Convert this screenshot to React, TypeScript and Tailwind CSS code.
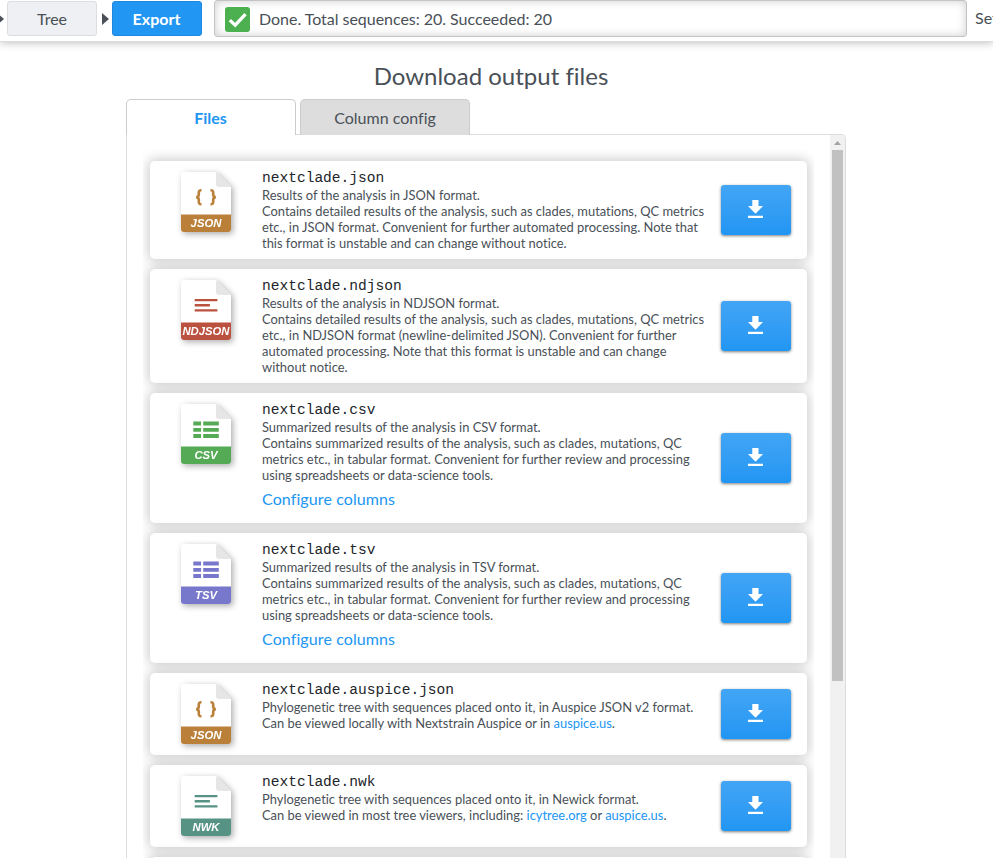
import React from 'react'

type Kind = 'braces' | 'lines' | 'table'

interface OutputFile {
  name: string
  ext: string
  color: string
  kind: Kind
  lines: React.ReactNode[]
  configurable?: boolean
}

const Link = ({ children }: { children: React.ReactNode }) => (
  <a className="text-[#2196f3]">{children}</a>
)

const files: OutputFile[] = [
  {
    name: 'nextclade.json',
    ext: 'JSON',
    color: '#ba8039',
    kind: 'braces',
    lines: [
      'Results of the analysis in JSON format.',
      'Contains detailed results of the analysis, such as clades, mutations, QC metrics',
      'etc., in JSON format. Convenient for further automated processing. Note that',
      'this format is unstable and can change without notice.',
    ],
  },
  {
    name: 'nextclade.ndjson',
    ext: 'NDJSON',
    color: '#bb513f',
    kind: 'lines',
    lines: [
      'Results of the analysis in NDJSON format.',
      'Contains detailed results of the analysis, such as clades, mutations, QC metrics',
      'etc., in NDJSON format (newline-delimited JSON). Convenient for further',
      'automated processing. Note that this format is unstable and can change',
      'without notice.',
    ],
  },
  {
    name: 'nextclade.csv',
    ext: 'CSV',
    color: '#55aa55',
    kind: 'table',
    configurable: true,
    lines: [
      'Summarized results of the analysis in CSV format.',
      'Contains summarized results of the analysis, such as clades, mutations, QC',
      'metrics etc., in tabular format. Convenient for further review and processing',
      'using spreadsheets or data-science tools.',
    ],
  },
  {
    name: 'nextclade.tsv',
    ext: 'TSV',
    color: '#7777cc',
    kind: 'table',
    configurable: true,
    lines: [
      'Summarized results of the analysis in TSV format.',
      'Contains summarized results of the analysis, such as clades, mutations, QC',
      'metrics etc., in tabular format. Convenient for further review and processing',
      'using spreadsheets or data-science tools.',
    ],
  },
  {
    name: 'nextclade.auspice.json',
    ext: 'JSON',
    color: '#ba8039',
    kind: 'braces',
    lines: [
      'Phylogenetic tree with sequences placed onto it, in Auspice JSON v2 format.',
      <>Can be viewed locally with Nextstrain Auspice or in <Link>auspice.us</Link>.</>,
    ],
  },
  {
    name: 'nextclade.nwk',
    ext: 'NWK',
    color: '#579384',
    kind: 'lines',
    lines: [
      'Phylogenetic tree with sequences placed onto it, in Newick format.',
      <>Can be viewed in most tree viewers, including: <Link>icytree.org</Link> or <Link>auspice.us</Link>.</>,
    ],
  },
]

function Glyph({ kind }: { kind: Kind }) {
  if (kind === 'braces') {
    return (
      <g fill="none" stroke="currentColor" strokeWidth="2.6">
        <path d="M20.5 18.2 Q17.8 18 17.8 20.4 V22.6 Q17.8 25 15.2 25.2 Q17.8 25.4 17.8 27.8 V30 Q17.8 32.4 20.5 32.2" />
        <path d="M29.5 18.2 Q32.2 18 32.2 20.4 V22.6 Q32.2 25 34.8 25.2 Q32.2 25.4 32.2 27.8 V30 Q32.2 32.4 29.5 32.2" />
      </g>
    )
  }
  if (kind === 'lines') {
    return <path fill="currentColor" d="M13.7 18.9h22.7v2.4H13.7zM13.7 24.1h15.2v2.3H13.7zM13.7 29.2h22.7v2.4H13.7z" />
  }
  return (
    <path
      fill="currentColor"
      d="M12.3 17.6h7.8v3.9h-7.8zM22.2 17.6h15.6v3.9H22.2zM12.3 23.9h7.8v3.9h-7.8zM22.2 23.9h15.6v3.9H22.2zM12.3 30.1h7.8v4h-7.8zM22.2 30.1h15.6v4H22.2z"
    />
  )
}

function FileIcon({ file }: { file: OutputFile }) {
  return (
    <svg
      className="mt-[11px] h-[60px] w-[50px] shrink-0 drop-shadow-[2px_2px_3px_rgba(0,0,0,0.33)]"
      viewBox="0 0 50 60"
      style={{ color: file.color }}
    >
      <path d="M3 0H35L50 15V57a3 3 0 0 1-3 3H3a3 3 0 0 1-3-3V3a3 3 0 0 1 3-3z" fill="#fff" />
      <path d="M35 0L50 15H38a3 3 0 0 1-3-3z" fill="#e6e6e6" />
      <path d="M0 42.4H50V57a3 3 0 0 1-3 3H3a3 3 0 0 1-3-3z" fill="currentColor" />
      <Glyph kind={file.kind} />
      <text
        x="25"
        y="55"
        textAnchor="middle"
        fill="#fff"
        className="font-['Liberation_Sans',Arial,sans-serif] text-[11.3px] font-bold italic"
      >
        {file.ext}
      </text>
    </svg>
  )
}

function FileCard({ file }: { file: OutputFile }) {
  return (
    <li className="flex min-h-[82px] shrink-0 rounded-[5px] bg-white pr-4 pl-[31px] shadow-[0_0_12px_2px_rgba(0,0,0,0.2)]">
      <FileIcon file={file} />
      <div className="ml-[31px] flex-1 py-2 whitespace-nowrap">
        <h2 className="h-[18px] font-['Liberation_Mono',monospace] text-[14.55px] leading-[18px] text-[#212529]">
          {file.name}
        </h2>
        {file.lines.map((line, i) => (
          <p key={i} className="text-[12.92px] leading-4">
            {line}
          </p>
        ))}
        {file.configurable && (
          <button className="block h-8 text-base leading-8 tracking-[0.1px] text-[#2196f3]">Configure columns</button>
        )}
      </div>
      <button className="flex h-[50px] w-[70px] items-center justify-center self-center rounded-[3px] bg-linear-to-b from-[#42a5f5] to-[#2196f3] shadow-[0_1px_3px_rgba(0,0,0,0.5)]">
        <svg className="mb-[2px] h-[18px] w-[15px] -translate-x-px" viewBox="0 0 15 18" fill="#fff">
          <path d="M4.3 0h6.2v6.1H15L7.5 13.7 0 6.1h4.3zM0 15.8h15V18H0z" />
        </svg>
      </button>
    </li>
  )
}

const Arrow = () => (
  <svg className="h-3 w-[7px] shrink-0" viewBox="0 0 7 12">
    <path d="M0 0L7 6L0 12z" fill="#495057" />
  </svg>
)

export default function App() {
  return (
    <div className="flex h-[858px] w-[993px] flex-col overflow-hidden bg-white font-[Lato,sans-serif] text-base text-[#495057] [font-variant-ligatures:none]">
      <header className="flex h-[42px] shrink-0 items-start overflow-hidden border-b border-[#dcdcdc] whitespace-nowrap shadow-[0_1px_8px_rgba(0,0,0,0.25)]">
        <div className="-ml-[3px] flex h-[37px] items-center">
          <Arrow />
        </div>
        <button className="mt-px ml-[3px] h-[35px] w-[90px] shrink-0 rounded-[3px] border border-[#dcdde0] bg-[#eff0f3]">
          Tree
        </button>
        <div className="ml-[5px] flex h-[37px] items-center">
          <Arrow />
        </div>
        <button className="mt-px ml-[3px] h-[35px] w-[90px] shrink-0 rounded-[3px] border border-[#1e88e0] bg-[#2196f3] pr-px font-bold text-white">
          Export
        </button>
        <div className="ml-3 flex h-[37px] w-[753px] shrink-0 items-center rounded-[3px] border border-[#c4c4c4] pl-[10px] shadow-[inset_0_0_10px_rgba(0,0,0,0.2)]">
          <svg className="mt-[2px] h-[25px] w-[25px]" viewBox="0 0 25 25">
            <rect width="25" height="25" rx="3" fill="#4caf50" />
            <path d="M4.8 13.1L10.2 18.1L20.5 7.2" fill="none" stroke="#fff" strokeWidth="3.3" />
          </svg>
          <span className="ml-[9px] tracking-[-0.03px]">Done. Total sequences: 20. Succeeded: 20</span>
        </div>
        <span className="ml-2 leading-[36px]">Settings</span>
      </header>

      <main className="ml-[126px] flex min-h-0 w-[720px] flex-1 flex-col">
        <h1 className="h-[57px] pt-4 pl-[10px] text-center text-[24px] leading-[36px]">
          Download output files
        </h1>
        <div className="z-10 flex shrink-0 gap-1">
          <button className="h-9 w-[170px] rounded-t-[5px] border border-b-0 border-[#ccc] bg-white pr-px font-bold text-[#2196f3]">
            Files
          </button>
          <button className="h-9 w-[170px] rounded-t-[5px] border border-b-0 border-[#ccc] bg-[#ddd]">
            Column config
          </button>
        </div>
        <section className="-mt-px flex min-h-0 flex-1 overflow-hidden rounded-tr-[5px] border border-b-0 border-[#dcdcdc]">
          <ul className="ml-4 flex w-[671px] flex-col gap-[10px] overflow-hidden px-[7px] pt-[26px]">
            {files.map((file) => (
              <FileCard key={file.name} file={file} />
            ))}
            <li className="h-20 shrink-0 rounded-[5px] bg-white shadow-[0_0_12px_2px_rgba(0,0,0,0.2)]" />
          </ul>
          <div className="ml-auto flex w-[15px] flex-col items-center bg-[#f1f1f1]">
            <svg className="h-[15px] w-[15px] shrink-0" viewBox="0 0 15 15">
              <path d="M4 10H11L7.5 6z" fill="#a3a3a3" />
            </svg>
            <div className="h-[531px] w-[11px] shrink-0 bg-[#c1c1c1]" />
          </div>
        </section>
      </main>
    </div>
  )
}
